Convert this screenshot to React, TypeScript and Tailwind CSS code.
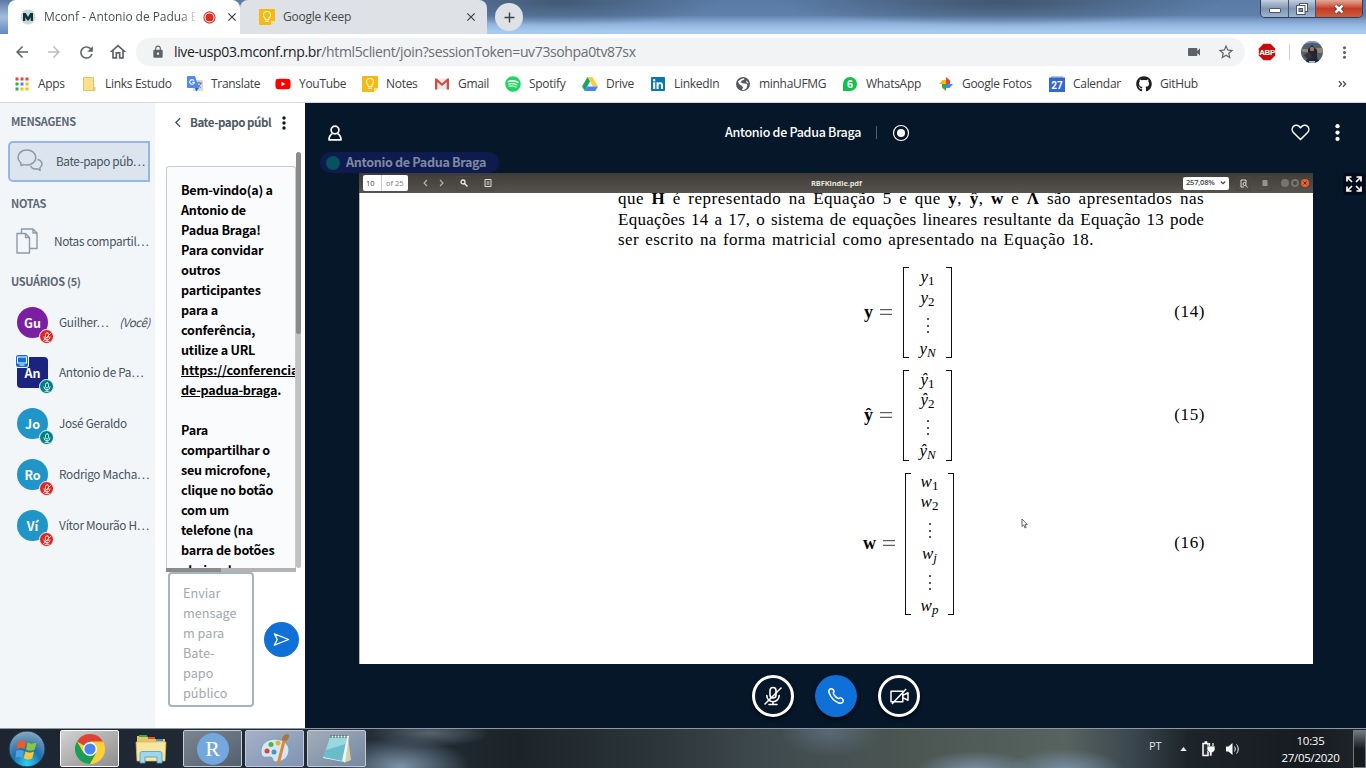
import React from "react";
import { MdArrowBack, MdArrowForward, MdRefresh, MdOutlineHome, MdLock, MdVideocam, MdStarBorder, MdMoreVert, MdClose, MdAdd } from "react-icons/md";
import { FaGithub, FaSpotify, FaYoutube, FaLinkedin } from "react-icons/fa";

const UI = "font-['Open_Sans','Noto_Sans',sans-serif]";
const BBB = "font-['Noto_Sans_CJK_SC','Noto_Sans',sans-serif]";

/* ---------- browser chrome ---------- */

function KeepIcon() {
  return (
    <svg viewBox="0 0 16 16" className="size-4 shrink-0">
      <path d="M1 0h14a1 1 0 0 1 1 1v11l-4 4H1a1 1 0 0 1-1-1V1a1 1 0 0 1 1-1z" fill="#f5b912" />
      <path d="M16 12l-4 4v-4z" fill="#fde28a" />
      <path d="M6.200 9.200C4.700 8 4.500 6.800 4.500 6a3.500 3.500 0 0 1 7 0c0 .8-.2 2-1.700 3.200V10.500H6.200z" fill="none" stroke="#fff3cf" strokeWidth="1.100" />
      <path d="M6.200 12.200h3.600" stroke="#fff" strokeWidth="1.200" />
    </svg>
  );
}

function WindowButtons() {
  return (
    <div className="mr-[3px] flex h-[18px] w-[103px] overflow-hidden rounded-b-[5px] border border-t-0 border-[#2e3f58]">
      <div className="flex w-[28px] items-end justify-center border-r border-[#41546d] bg-linear-to-b from-[#c3d0e0] via-[#8196b2] to-[#9db3cf] pb-[4px]">
        <div className="h-[5px] w-[12px] rounded-[1px] border border-[#4b5666] bg-white" />
      </div>
      <div className="flex w-[27px] items-center justify-center border-r border-[#41546d] bg-linear-to-b from-[#c3d0e0] via-[#8196b2] to-[#9db3cf]">
        <svg viewBox="0 0 12 12" className="size-3">
          <rect x="3.500" y=".5" width="8" height="8" fill="#fff" stroke="#4b5666" />
          <rect x=".5" y="2.500" width="8.500" height="9" fill="#fff" stroke="#4b5666" />
          <rect x="3" y="5.500" width="3.500" height="3" fill="#8196b2" stroke="#4b5666" />
        </svg>
      </div>
      <div className="flex flex-1 items-center justify-center bg-linear-to-b from-[#e3a899] via-[#c13c26] to-[#cf5c3d]">
        <svg viewBox="0 0 12 10" className="h-[10px] w-3">
          <path d="M2.500 1.500l7 7M9.500 1.500l-7 7" stroke="#5b2a28" strokeWidth="4.200" />
          <path d="M2.500 1.500l7 7M9.500 1.500l-7 7" stroke="#fff" strokeWidth="2.600" />
        </svg>
      </div>
    </div>
  );
}

function TabStrip() {
  return (
    <div className="flex h-[34px] bg-[radial-gradient(ellipse_160px_24px_at_560px_2px,#435a76_0%,transparent_100%),radial-gradient(ellipse_220px_24px_at_1000px_2px,#41566f_0%,transparent_100%),linear-gradient(180deg,#5b7ba6_0%,#5f80aa_45%,#8fb2dc_70%,#a8caf0_92%)]">
      <div className="w-2 bg-linear-to-b from-[#5c7ba5] via-[#a3bcdc] to-[#6389bd]" />
      <div className="flex w-[232px] items-center rounded-t-[8px] bg-white pl-[12px]">
        <svg viewBox="0 0 16 16" className="size-4 shrink-0">
          <circle cx="8" cy="8" r="7.500" fill="#c9d9dc" />
          <path d="M3 12V4h2.800L8 8l2.200-4H13v8h-2.300V8.200L8.800 11.500H7.200L5.300 8.200V12z" fill="#12333c" />
        </svg>
        <div className={`${UI} ml-[8px] w-[151px] whitespace-nowrap bg-linear-to-r from-[#45494d] from-90% to-[#45494d30] bg-clip-text text-[12px] leading-[18px] tracking-[-0.050px] text-transparent`}>Mconf - Antonio de Padua B</div>
        <svg viewBox="0 0 14 14" className="ml-[8px] size-[13px] shrink-0">
          <circle cx="7" cy="7" r="6" fill="none" stroke="#d93025" strokeWidth="1.200" />
          <circle cx="7" cy="7" r="4.300" fill="#d93025" />
        </svg>
        <MdClose className="ml-[9px] size-[14px] shrink-0 text-[#3c4043]" />
      </div>
      <div className="flex w-[247px] items-center rounded-t-[8px] bg-[#dee1e6] pl-[19px]">
        <KeepIcon />
        <div className={`${UI} ml-[8px] flex-1 text-[12px] leading-[18px] tracking-[-0.250px] text-[#45494d]`}>Google Keep</div>
        <MdClose className="mr-[9px] size-[14px] text-[#3c4043]" />
      </div>
      <div className="ml-[8px] mt-[3px] flex size-7 items-center justify-center rounded-full bg-[#dee1e6]">
        <MdAdd className="size-[17px] text-[#3c4043]" />
      </div>
      <div className="flex-1" />
      <WindowButtons />
    </div>
  );
}

function Toolbar() {
  return (
    <div className="flex h-[36px] items-center bg-white text-[#5f6368]">
      <MdArrowBack className="ml-[13px] size-[18px]" />
      <MdArrowForward className="ml-[14px] size-[18px] text-[#bbbdc0]" />
      <MdRefresh className="ml-[14px] size-[19px]" />
      <MdOutlineHome className="ml-[12px] size-[20px]" />
      <div className="ml-[8px] flex h-7 w-[1109px] items-center rounded-full bg-[#f1f3f4] pl-[15px] pr-[10px]">
        <MdLock className="size-[14px]" />
        <div className={`${UI} ml-[9px] flex-1 text-[14px] leading-5 tracking-[-0.370px] text-[#6a6e73]`}>
          <span className="text-[#202124]">live-usp03.mconf.rnp.br</span>/html5client/join?sessionToken=uv73sohpa0tv87sx
        </div>
        <MdVideocam className="size-[16px]" />
        <MdStarBorder className="ml-[15px] size-[18px]" />
      </div>
      <svg viewBox="0 0 18 18" className="ml-[13px] size-[18px]">
        <path d="M5.500 .8h7l4.700 4.700v7l-4.700 4.700h-7L.8 12.500v-7z" fill="#c70d0d" />
        <text x="9" y="12" textAnchor="middle" fontFamily="Liberation Sans, sans-serif" fontWeight="bold" fontSize="8" letterSpacing="-.4" fill="#fff">ABP</text>
      </svg>
      <div className="ml-[13px] h-4 w-px bg-[#cdd0d3]" />
      <svg viewBox="0 0 22 22" className="ml-[11px] size-[22px] rounded-full">
        <rect width="22" height="22" fill="#52616f" />
        <path d="M0 5c6-4 15-5 22 0V0H0z" fill="#7fa9d8" />
        <path d="M0 8h7v3H2zM15 7h7v5h-5z" fill="#93857a" />
        <path d="M7 8l4-4 5 5v8l4 5H4l3-6z" fill="#24252e" />
        <circle cx="11" cy="8" r="2.200" fill="#9b7466" />
        <path d="M3 14l5-3 4 5-5 3z" fill="#39343b" />
        <path d="M8 20h6v2H8z" fill="#9fc0df" />
      </svg>
      <MdMoreVert className="ml-[12px] size-[19px]" />
    </div>
  );
}

const AppsIcon = () => (
  <svg viewBox="0 0 16 16" className="size-4">
    {["#ea4335", "#ea4335", "#ea4335", "#34a853", "#4285f4", "#fbbc05", "#34a853", "#fbbc05", "#fbbc05"].map((c, i) => (
      <rect key={i} x={1.500 + (i % 3) * 5} y={1.500 + Math.floor(i / 3) * 5} width="3" height="3" fill={c} />
    ))}
  </svg>
);
const FolderIcon = () => (
  <svg viewBox="0 0 16 16" className="size-4">
    <path d="M2.500 1.500h10v10h1.500v3H2.500z" fill="#fbe18d" stroke="#e6c35f" />
    <path d="M12.500 11v3.500" stroke="#e6c35f" />
  </svg>
);
const TranslateIcon = () => (
  <svg viewBox="0 0 16 16" className="size-4">
    <rect x="6" y="4" width="10" height="11" rx="1" fill="#d5dade" />
    <path d="M9 7h6M12 5.500V7m-1.800 0c.5 2.200 2 3.800 3.600 4.600M13.800 7c-.5 2-2 4-3.600 4.800" stroke="#68747d" fill="none" />
    <path d="M1 0h7l4 12H1a1 1 0 0 1-1-1V1a1 1 0 0 1 1-1z" fill="#4c8bf5" />
    <path d="M8 12h4l-3 3.500z" fill="#2b5fc4" />
    <path d="M7 4.700A2.300 2.300 0 1 0 7.300 6.300H5.200" stroke="#fff" fill="none" strokeWidth="1.100" />
  </svg>
);
const GmailIcon = () => (
  <svg viewBox="0 0 16 16" className="size-4">
    <path d="M1 2.500h14v11H1z" fill="#e9e9e9" />
    <path d="M1 13.500v-11h1.500L8 7.200l5.500-4.700H15v11h-2.300V6L8 10 3.300 6v7.500z" fill="#d54b3d" />
  </svg>
);
const DriveIcon = () => (
  <svg viewBox="0 0 16 16" className="size-4">
    <path d="M5.500 1h5L16 10.500h-5z" fill="#fbcf3c" />
    <path d="M5.500 1L8 5.500 2.800 15 0 10.500z" fill="#1da362" />
    <path d="M5.200 10.500H16L13.300 15H2.700z" fill="#4a83f0" />
  </svg>
);
const GlobeIcon = () => (
  <svg viewBox="0 0 16 16" className="size-4">
    <circle cx="8" cy="8" r="7" fill="#54585c" />
    <path d="M3 5.500c1.500-1.500 3-3 5.500-3.300l1 1.300-2.500 1-1.500 1.800 2 .9 4 .6 1 1.500-1 3-3 2-1.500-.6 1-2.200-1-1.500L4 8z" fill="#fff" />
    <path d="M11 4.500l2 1.500.5 1.500-2-1z" fill="#fff" />
  </svg>
);
const WhatsIcon = () => (
  <svg viewBox="0 0 16 16" className="size-4">
    <path d="M1 15V8a7 7 0 1 1 7 7z" fill="#12c148" />
    <text x="8" y="12" textAnchor="middle" fontFamily="Liberation Sans, sans-serif" fontWeight="bold" fontSize="11" fill="#fff">6</text>
  </svg>
);
const PhotosIcon = () => (
  <svg viewBox="0 0 16 16" className="size-4">
    <path d="M8 8V1l4 3.500V8z" fill="#ea4335" />
    <path d="M8 8h7l-3.500 4H8z" fill="#4285f4" />
    <path d="M8 8v7l-4-3.500V8z" fill="#34a853" />
    <path d="M8 8H1l3.500-4H8z" fill="#fbbc05" />
  </svg>
);
const CalendarIcon = () => (
  <svg viewBox="0 0 16 16" className="size-4">
    <path d="M2 0h12v3H2z" fill="#c5c9ce" />
    <rect y="1.500" width="16" height="14.500" fill="#3367d6" />
    <text x="8" y="12.500" textAnchor="middle" fontFamily="Roboto, sans-serif" fontWeight="bold" fontSize="10" fill="#fff">27</text>
  </svg>
);

function Bookmarks() {
  const items: [string, string, React.ReactNode][] = [
    ["Apps", "w-[67px]", <AppsIcon />],
    ["Links Estudo", "w-[106px]", <FolderIcon />],
    ["Translate", "w-[88px]", <TranslateIcon />],
    ["YouTube", "w-[87px]", <FaYoutube className="size-4 text-[#f00]" />],
    ["Notes", "w-[72px]", <KeepIcon />],
    ["Gmail", "w-[71px]", <GmailIcon />],
    ["Spotify", "w-[77px]", <FaSpotify className="size-4 text-[#1ed760]" />],
    ["Drive", "w-[68px]", <DriveIcon />],
    ["LinkedIn", "w-[85px]", <FaLinkedin className="size-4 text-[#0a76b4]" />],
    ["minhaUFMG", "w-[107px]", <GlobeIcon />],
    ["WhatsApp", "w-[96px]", <WhatsIcon />],
    ["Google Fotos", "w-[111px]", <PhotosIcon />],
    ["Calendar", "w-[87px]", <CalendarIcon />],
    ["GitHub", "w-[64px]", <FaGithub className="size-4 text-[#1b1f23]" />],
  ];
  return (
    <div className="flex h-[33px] items-center border-b border-[#d5d9dd] bg-white pl-[14px] pb-[4px]">
      {items.map(([label, w, icon]) => (
        <div key={label} className={`${w} flex shrink-0 items-center gap-2`}>
          <div className="size-4 shrink-0">{icon}</div>
          <span className={`${UI} whitespace-nowrap text-[12px] leading-4 tracking-[-0.300px] text-[#3c4043]`}>{label}</span>
        </div>
      ))}
      <svg viewBox="0 0 10 8" className="ml-auto mr-[19px] h-[8px] w-[9px]">
        <path d="M1 1l3 3-3 3M5.500 1l3 3-3 3" fill="none" stroke="#4d5156" strokeWidth="1.500" />
      </svg>
    </div>
  );
}

/* ---------- participants panel ---------- */

function Mic({ muted, className }: { muted?: boolean; className: string }) {
  return (
    <svg viewBox="0 0 20 20" className={className} fill="none" stroke="currentColor" strokeWidth="1.600" strokeLinecap="round">
      <rect x="7" y="1.500" width="6" height="10.500" rx="3" />
      <path d="M3.800 9.500a6.200 6.200 0 0 0 12.400 0M10 15.800v2.700M6 18.500h8" />
      {muted && <path d="M2 18L18 2" />}
    </svg>
  );
}

function User({ initials, name, color, muted, you, presenter }: { initials: string; name: string; color: string; muted?: boolean; you?: boolean; presenter?: boolean }) {
  return (
    <div className="flex h-[51px] items-center pl-[17px] first:-mb-px">
      <div className={`relative flex size-[31px] shrink-0 items-center justify-center text-[12.500px] leading-4 font-bold text-white ${color} ${presenter ? "rounded-[4px]" : "rounded-full"}`}>
        {initials}
        <div className={`absolute -bottom-[6px] -right-[6px] flex size-[15px] items-center justify-center rounded-full border-[1.500px] border-[#f3f6f9] ${muted ? "bg-[#df2721]" : "bg-[#008081]"}`}>
          <Mic muted={muted} className="size-[10px]" />
        </div>
        {presenter && (
          <div className="absolute -left-[1px] -top-[2px] flex size-[12px] items-center justify-center rounded-[2px] bg-[#0f70d7] ring-1 ring-white">
            <svg viewBox="0 0 12 12" className="size-[12px]" fill="none" stroke="#fff">
              <rect x="1.500" y="2" width="9" height="6" />
              <path d="M3.500 10h5" />
            </svg>
          </div>
        )}
      </div>
      <div className="-mt-px ml-[11px] flex w-[91px] justify-between whitespace-nowrap text-[11.800px] leading-5 tracking-[-0.300px] text-[#46535f]">
        <span>{name}</span>
        {you && <span className="text-[11.500px] italic tracking-[-0.400px]">(Você)</span>}
      </div>
    </div>
  );
}

function Sidebar() {
  const title = "pl-[11px] text-[11px] leading-4 font-bold tracking-[-0.350px] text-[#5c6874]";
  return (
    <div className={`${BBB} w-[155px] shrink-0 overflow-hidden bg-[#f3f6f9]`}>
      <div className={`${title} pt-[10px]`}>MENSAGENS</div>
      <div className="ml-[8px] mt-[12px] flex h-[41px] w-[142px] items-center rounded-l-[5px] border-2 border-[#92b8e8] bg-[#dce4ed] pb-[2px] pl-[7px]">
        <svg viewBox="0 0 26 24" className="h-6 w-[26px] shrink-0" fill="none" stroke="#8b9aa8" strokeWidth="1.500" strokeLinejoin="round">
          <path d="M4 16.500c.2-1.300 0-2.200-.5-3C1.800 12 1 10.500 1 8.500 1 4.300 4.800 1 9.800 1s9 3.300 9 7.500-4 7.500-9 7.500c-1 0-2-.1-3-.4z" />
          <path d="M20.500 10.500c2.800.6 4.500 2.300 4.500 4.600 0 1.500-.8 2.700-2 3.500-.3.900-.2 1.800.2 2.700l-2.800-1.500c-3.400.6-6-.8-6.900-3" />
        </svg>
        <span className="ml-[13px] whitespace-nowrap text-[11.800px] leading-5 tracking-[-0.380px] text-[#46535f]">Bate-papo púb…</span>
      </div>
      <div className={`${title} mt-[13px]`}>NOTAS</div>
      <div className="mt-[10px] flex h-[40px] items-center pl-[16px]">
        <svg viewBox="0 0 22 26" className="h-[26px] w-[22px] shrink-0" fill="none" stroke="#8b9aa8" strokeWidth="1.400" strokeLinejoin="round">
          <path d="M1 5.500h8.500l4 4V25H1zM9.500 5.500v4h4" />
          <path d="M5.500 5.500V1H17l4 4v15.500h-7.500M17 1v4h4" />
        </svg>
        <span className="ml-[16px] whitespace-nowrap text-[11.800px] leading-5 tracking-[-0.340px] text-[#46535f]">Notas compartil…</span>
      </div>
      <div className={`${title} mt-[12px]`}>USUÁRIOS (5)</div>
      <div className="mt-[8px] flex flex-col">
        <User initials="Gu" name="Guilher…" color="bg-[#7b1fa2]" muted you />
        <User initials="An" name="Antonio de Pa…" color="bg-[#1a237e]" presenter />
        <User initials="Jo" name="José Geraldo" color="bg-[#2095c7]" />
        <User initials="Ro" name="Rodrigo Macha…" color="bg-[#2095c7]" muted />
        <User initials="Ví" name="Vítor Mourão H…" color="bg-[#2095c7]" muted />
      </div>
    </div>
  );
}

/* ---------- chat panel ---------- */

function Chat() {
  const lines = ["Bem-vindo(a) a", "Antonio de", "Padua Braga!", "Para convidar", "outros", "participantes", "para a", "conferência,", "utilize a URL"];
  const rest = ["", "Para", "compartilhar o", "seu microfone,", "clique no botão", "com um", "telefone (na", "barra de botões", "abaixo da"];
  return (
    <div className={`${BBB} flex w-[150px] shrink-0 flex-col bg-white`}>
      <div className="flex h-[39px] items-center pl-[20px]">
        <svg viewBox="0 0 7 12" className="h-[11px] w-[6px]" fill="none" stroke="#3d4a58" strokeWidth="1.400">
          <path d="M6 1L1 6l5 5" />
        </svg>
        <span className="-mt-[2px] ml-[9px] w-[80px] whitespace-nowrap text-[11.600px] font-bold leading-5 tracking-[-0.480px] text-[#4e5a66]">Bate-papo públ</span>
        <svg viewBox="0 0 4 14" className="ml-[12px] h-[14px] w-[4px] fill-[#06172a]">
          <circle cx="2" cy="2" r="1.700" /><circle cx="2" cy="7" r="1.700" /><circle cx="2" cy="12" r="1.700" />
        </svg>
      </div>
      <div className="flex h-[426px] pl-[11px]">
        <div className="mt-[24px] h-[402px] w-[130px] overflow-hidden rounded-t-[3px] border border-b-0 border-[#c3ccd5] bg-[#f9fbfd] pl-[14px] pt-[13px] text-[12.600px] font-bold leading-5 tracking-[-0.220px] text-black">
          {lines.map((l) => <div key={l} className="h-5 whitespace-nowrap">{l}</div>)}
          <div className="h-5 whitespace-nowrap tracking-[-0.080px] underline">https://conferencia</div>
          <div className="h-5 whitespace-nowrap"><span className="underline">de-padua-braga</span>.</div>
          {rest.map((l, i) => <div key={i} className="h-5 whitespace-nowrap">{l}</div>)}
        </div>
        <div className="mt-[10px] flex h-[416px] w-[5px] flex-col overflow-hidden rounded-full bg-[#c1c1c1]">
          <div className="h-[182px] rounded-full bg-[#8b8b8b]" />
        </div>
      </div>
      <div className="ml-[11px] flex h-[4px] w-[130px] shrink-0 bg-[#b3b3b3]">
        <div className="w-[55px] bg-[#8b8b8b]" />
      </div>
      <div className="flex items-center pl-[13px]">
        <div className="h-[135px] w-[86px] rounded-[4px] border-2 border-[#a7b3bd] pl-[13px] pt-[9px] text-[12.700px] leading-5 text-[#a1a8ae]">
          {["Enviar", "mensage", "m para", "Bate-", "papo", "público"].map((l) => <div key={l}>{l}</div>)}
        </div>
        <div className="ml-[10px] flex size-[35px] items-center justify-center rounded-full bg-[#0f70d7]">
          <svg viewBox="0 0 18 15" className="h-[15px] w-[17px]" fill="none" stroke="#fff" strokeWidth="1.400" strokeLinejoin="round">
            <path d="M1.500 1.500L16.500 7.500l-15 6 3-6z" />
          </svg>
        </div>
      </div>
    </div>
  );
}

/* ---------- shared document ---------- */

const MATH = "font-['Liberation_Serif',serif] text-black";

function Dots() {
  return (
    <div className="flex h-[15px] shrink-0 flex-col items-center justify-between">
      <div className="size-[2px] rounded-full bg-[#222]" />
      <div className="size-[2px] rounded-full bg-[#222]" />
      <div className="size-[2px] rounded-full bg-[#222]" />
    </div>
  );
}

function Entry({ base, sub, italic, className }: { base: string; sub: string; italic?: boolean; className: string }) {
  return (
    <div className={`flex h-5 shrink-0 items-baseline justify-center text-[17px] italic leading-[20px] ${className}`}>
      <span>{base}</span>
      <span className={`relative top-[3px] text-[13px] leading-none ${italic ? "italic" : "not-italic"}`}>{sub}</span>
    </div>
  );
}

function Equation({ lhs, lhsClass, matrixClass, no, className, children }: { lhs: string; lhsClass: string; matrixClass: string; no: string; className: string; children: React.ReactNode }) {
  return (
    <div className={`flex items-center ${className}`}>
      <div className={`flex items-center pb-[2px] text-[18px] leading-5 ${lhsClass}`}>
        <b>{lhs}</b>
        <svg viewBox="0 0 12 6" className="ml-[7px] h-[6px] w-[12px]"><path d="M0 .7h12M0 5.300h12" stroke="#222" strokeWidth=".9" /></svg>
      </div>
      <div className={`flex h-full justify-between ${matrixClass}`}>
        <div className="w-[6px] shrink-0 border-y border-l border-[#111]" />
        <div className="flex flex-col items-center">{children}</div>
        <div className="w-[6px] shrink-0 border-y border-r border-[#111]" />
      </div>
      <div className="ml-auto mr-[108px] pb-[2px] text-[17px] leading-5 tracking-[0.600px]">({no})</div>
    </div>
  );
}

function Presentation() {
  const box = "flex h-[15px] w-[15px] items-center justify-center rounded-[2px] border border-[#4a4743]";
  return (
    <div className="flex h-[491px] w-[954px] flex-col overflow-hidden bg-white">
      <div className={`${UI} flex h-[20px] shrink-0 items-center bg-linear-to-b from-[#3e3c39] to-[#57534e] text-[7.500px] text-[#e4e1dc]`}>
        <div className="ml-[4px] flex h-[16px] w-[45px] items-center rounded-[2px] bg-white leading-4">
          <span className="w-[19px] border-r border-[#c9c9c9] pl-[3px] text-[#444]">10</span>
          <span className="pl-[4px] text-[#777]">of 25</span>
        </div>
        <svg viewBox="0 0 22 8" className="ml-[15px] h-[8px] w-[22px]" fill="none" stroke="#bab6b0" strokeWidth="1.100"><path d="M4 1L1 4l3 3M17 1l3 3-3 3" /></svg>
        <div className={`${box} ml-[11px]`}>
          <svg viewBox="0 0 8 8" className="size-[8px]" fill="none" stroke="#eee" strokeWidth="1.300"><circle cx="3" cy="3" r="2" /><path d="M4.700 4.700L7.500 7.500" /></svg>
        </div>
        <div className={`${box} ml-[9px]`}>
          <svg viewBox="0 0 8 8" className="size-[8px]" fill="none" stroke="#ddd"><path d="M1 .5h6v7H1zM2.500 3h3M2.500 5h3" /></svg>
        </div>
        <div className="ml-[316px] w-[52px] whitespace-nowrap font-bold leading-4 tracking-[-0.120px]">RBFKindle.pdf</div>
        <div className="ml-[320px] flex h-[13px] w-[46px] items-center justify-between rounded-[2px] bg-white px-[3px] text-[#444]">
          <span className="font-semibold leading-none tracking-[-0.200px]">257,08%</span>
          <svg viewBox="0 0 8 5" className="h-[4px] w-[6px]" fill="none" stroke="#444" strokeWidth="1.500"><path d="M1 .5l3 3 3-3" /></svg>
        </div>
        <div className={`${box} ml-[7px]`}>
          <svg viewBox="0 0 8 9" className="h-[9px] w-[8px]" fill="none" stroke="#ddd"><path d="M1 1h5v3M1 1v7h3" /><circle cx="4.500" cy="5" r="1.500" /><path d="M5.500 6L7.500 8.500" /></svg>
        </div>
        <div className={`${box} ml-[6px]`}>
          <svg viewBox="0 0 6 6" className="size-[6px]" stroke="#ddd"><path d="M.5 1h5M.5 3h5M.5 5h5" /></svg>
        </div>
        <div className="ml-[9px] size-[8px] rounded-full bg-[#77736e]" />
        <div className="ml-[2px] size-[8px] rounded-full border-2 border-[#77736e]" />
        <div className="ml-[2px] flex size-[8px] items-center justify-center rounded-full bg-[#e8622c]">
          <svg viewBox="0 0 4 4" className="size-[4px]" stroke="#5b2a15"><path d="M.5 .5l3 3M3.500 .5l-3 3" /></svg>
        </div>
      </div>
      <div className={`${MATH} relative flex-1 overflow-hidden border-l border-[#b5b5b5]`}>
        <div className="-mt-[4px] ml-[258px] w-[586px] text-[17px] leading-[20.500px] [text-align-last:justify]">
          <div className="whitespace-nowrap tracking-[0.500px]">que <b>H</b> é representado na Equação 5 e que <b>y</b>, <b>ŷ</b>, <b>w</b> e <b>Λ</b> são apresentados nas</div>
          <div className="whitespace-nowrap tracking-[0.250px]">Equações 14 a 17, o sistema de equações lineares resultante da Equação 13 pode</div>
          <div className="w-[476px] whitespace-nowrap tracking-[0.450px]">ser escrito na forma matricial como apresentado na Equação 18.</div>
        </div>
        <Equation lhs="y" lhsClass="ml-[504px]" matrixClass="ml-[11px] w-[49px]" no="14" className="mt-[16.500px] h-[91px]">
          <Entry base="y" sub="1" className="" />
          <Entry base="y" sub="2" className="mt-px" />
          <div className="mt-[10px]"><Dots /></div>
          <Entry base="y" sub="N" italic className="mt-[6px]" />
        </Equation>
        <Equation lhs="ŷ" lhsClass="ml-[504px]" matrixClass="ml-[11px] w-[49px]" no="15" className="mt-[12px] h-[91px]">
          <Entry base="ŷ" sub="1" className="" />
          <Entry base="ŷ" sub="2" className="" />
          <div className="mt-[10px]"><Dots /></div>
          <Entry base="ŷ" sub="N" italic className="mt-[6px]" />
        </Equation>
        <Equation lhs="w" lhsClass="ml-[503px]" matrixClass="ml-[10px] w-[49px]" no="16" className="mt-[12px] h-[142px]">
          <Entry base="w" sub="1" className="-mt-px" />
          <Entry base="w" sub="2" className="" />
          <div className="mt-[11px]"><Dots /></div>
          <Entry base="w" sub="j" italic className="mt-[6px]" />
          <div className="mt-[11px]"><Dots /></div>
          <Entry base="w" sub="p" italic className="mt-[6px]" />
        </Equation>
        <svg viewBox="0 0 7 11" className="absolute left-[661px] top-[325px] h-[11px] w-[7px]"><path d="M1 1v7.500l1.800-1.500 1.200 3 1.200-.6-1.200-2.800h2.300z" fill="#fff" stroke="#555" strokeWidth=".9" /></svg>
      </div>
    </div>
  );
}

function Meeting() {
  const round = "flex size-[42px] items-center justify-center rounded-full text-white shadow-[0_2px_4px_#000c]";
  return (
    <div className={`${BBB} flex flex-1 flex-col bg-[#06172a]`}>
      <div className="flex h-[49px] items-center pt-[10px] text-white">
        <svg viewBox="0 0 14 16" className="ml-[23px] h-[16px] w-[14px]" fill="none" stroke="currentColor" strokeWidth="1.700" strokeLinejoin="round">
          <circle cx="7" cy="5" r="3.900" />
          <path d="M4.500 8.500C2.300 9.800 1 11.700 1 14.800h12c0-3.100-1.300-5-3.500-6.300" />
        </svg>
        <span className="-mt-[2px] ml-[383px] w-[137px] whitespace-nowrap text-[12.500px] font-medium leading-5 tracking-[-0.290px]">Antonio de Padua Braga</span>
        <div className="ml-[14px] h-[13px] w-px bg-[#506071]" />
        <svg viewBox="0 0 18 18" className="ml-[15px] size-[18px]"><circle cx="9" cy="9" r="7.500" fill="none" stroke="#fff" strokeWidth="1.200" /><circle cx="9" cy="9" r="4" fill="#fff" /></svg>
        <svg viewBox="0 0 20 18" className="ml-auto h-[17px] w-[19px]" fill="none" stroke="#fff" strokeWidth="1.600" strokeLinejoin="round"><path d="M10 16.500L2.500 9C.8 7.200.8 4.300 2.400 2.700 4.500.6 8 1 10 4c2-3 5.500-3.400 7.600-1.300 1.600 1.600 1.600 4.500-.1 6.300z" /></svg>
        <svg viewBox="0 0 4 16" className="ml-[25px] mr-[26px] h-[17px] w-[5px] fill-white"><circle cx="2" cy="2" r="2" /><circle cx="2" cy="8" r="2" /><circle cx="2" cy="14" r="2" /></svg>
      </div>
      <div className="ml-[15px] flex h-[21px] w-[179px] items-center rounded-full bg-[#0e1b4e]">
        <div className="ml-[6px] size-[14px] rounded-full bg-[#07535b]" />
        <span className="-mt-[2px] ml-[6px] whitespace-nowrap text-[12.600px] font-bold leading-5 tracking-[-0.340px] text-[#7f88a3]">Antonio de Padua Braga</span>
      </div>
      <div className="flex pl-[54px]">
        <Presentation />
        <div className="ml-[30px] flex size-[22px] items-center justify-center rounded-[4px] bg-[#030c18]">
          <svg viewBox="0 0 16 16" className="size-4" fill="none" stroke="#fff" strokeWidth="1.700"><path d="M1 5.500V1h4.500M1 1l5 5M10.500 1H15v4.500M15 1l-5 5M1 10.500V15h4.500M1 15l5-5M15 10.500V15h-4.500M15 15l-5-5" /></svg>
        </div>
      </div>
      <div className="ml-[447px] flex h-[64px] items-center gap-[21px]">
        <div className={`${round} border-3 border-white`}><Mic muted className="size-[20px]" /></div>
        <div className={`${round} bg-[#0f70d7]`}>
          <svg viewBox="0 0 20 20" className="size-[18px]" fill="none" stroke="currentColor" strokeWidth="1.700" strokeLinejoin="round">
            <path d="M3 2.500C5 1.200 7 2.500 7.800 4.600c.4 1.200-1 1.700-.8 2.500.6 2 3.600 5 5.700 5.700.9.200 1.500-1.100 2.600-.7 2 .7 3.500 2.700 2.300 4.500-1.200 1.600-3.200 1.600-5 .9C8.500 15.800 4.300 11.500 2.500 7 1.800 5.200 1.800 3.500 3 2.500z" />
          </svg>
        </div>
        <div className={`${round} border-3 border-white`}>
          <svg viewBox="0 0 22 18" className="h-[17px] w-[21px]" fill="none" stroke="currentColor" strokeWidth="1.600" strokeLinejoin="round">
            <path d="M2 3.500h12.500v11H2zM15 7.500l5-2.500v8l-5-2.500M3 17L18 1" />
          </svg>
        </div>
      </div>
    </div>
  );
}

/* ---------- taskbar ---------- */

function Taskbar() {
  const btn = "flex h-[37px] w-[59px] items-center justify-center rounded-[2px] border border-[#c3cbd6]";
  return (
    <div className="flex h-[40px] items-center border-t border-[#8d98a0] bg-[radial-gradient(ellipse_70px_30px_at_400px_38px,#7d93a8_0%,transparent_100%),radial-gradient(ellipse_60px_20px_at_975px_42px,#7c92a8_0%,transparent_100%),radial-gradient(ellipse_60px_22px_at_1065px_42px,#7a90a6_0%,transparent_100%),radial-gradient(ellipse_50px_26px_at_830px_2px,#596977_0%,transparent_100%),radial-gradient(ellipse_60px_14px_at_430px_4px,#56646f_0%,transparent_100%),linear-gradient(90deg,#1d2630_0%,#232d37_28%,#1c2429_38%,#2c3539_48%,#3f4a4e_56%,#4d5854_68%,#56635f_78%,#3a464f_83%,#1d242a_87%,#161b20_96%,#20262b_100%)]">
      <svg viewBox="0 0 38 38" className="ml-[8px] size-[38px]">
        <defs>
          <radialGradient id="orb" cx=".5" cy=".9" r=".9"><stop offset="0" stopColor="#2fd0f5" /><stop offset=".45" stopColor="#1c6fae" /><stop offset="1" stopColor="#8ea9bd" /></radialGradient>
        </defs>
        <circle cx="19" cy="19" r="18" fill="url(#orb)" stroke="#16324a" />
        <path d="M10 12c3-2 5-2 8 0l-1.500 7c-3-1.500-5-1.500-8 0z" fill="#ee5a24" />
        <path d="M19.500 12.500c3 1.500 5 1.500 9 0l-2 7.500c-3 1.300-6 1-8.500-.5z" fill="#8cc63f" />
        <path d="M8 21c3-1.500 5-1.500 8 0l-1.500 7c-3-1.500-5-1.500-7 0z" fill="#4aa3e0" />
        <path d="M17.500 21.500c3 1.500 5.500 1.500 8.500 0l-1.800 7c-3 1.500-5.500 1.500-8.500-.3z" fill="#fdc82f" />
      </svg>
      <div className={`${btn} ml-[14px] border-white bg-linear-to-br from-[#d3d3d3] to-[#8d8d8f]`}>
        <svg viewBox="0 0 30 30" className="size-[30px]">
          <circle cx="15" cy="15" r="15" fill="#fbd038" />
          <path d="M15 15L2 7.500A15 15 0 0 1 28 7.500H15z" fill="#dc4437" />
          <path d="M2 7.500A15 15 0 0 0 15 30l6.500-11.300L8.500 18.700z" fill="#1b9d58" />
          <path d="M15 8h13A15 15 0 0 1 15 30l6.500-11.300z" fill="#fbd038" />
          <circle cx="15" cy="15" r="7" fill="#fff" /><circle cx="15" cy="15" r="5.600" fill="#4a86f0" />
        </svg>
      </div>
      <svg viewBox="0 0 32 30" className="ml-[16px] h-[30px] w-[32px]">
        <path d="M2 2h10l2 3h16v20H2z" fill="#e3c565" />
        <path d="M4 1h8v2H4z" fill="#3ca55c" /><path d="M13 3h7v2h-7z" fill="#e05238" /><path d="M21 5h7v2h-7z" fill="#3f8fd8" />
        <path d="M1 8h30l-1 19H2z" fill="#f7e6a0" stroke="#d4b65b" strokeWidth=".7" />
        <path d="M5 29v-9c0-2 1-2.500 3-2.500h16c2 0 3 .5 3 2.500v9h-5v-6H10v6z" fill="#9ed5ef" stroke="#4c9bc4" strokeWidth=".8" />
      </svg>
      <div className={`${btn} ml-[16px] bg-linear-to-br from-[#aab4c0aa] to-[#74839599]`}>
        <div className="flex size-[32px] items-center justify-center rounded-full bg-[#73a7dd] font-['Liberation_Serif',serif] text-[22px] leading-none text-white">R</div>
      </div>
      <div className={`${btn} ml-[3px] bg-linear-to-br from-[#a5b0c6] to-[#8094b4]`}>
        <svg viewBox="0 0 34 32" className="h-[32px] w-[34px]">
          <path d="M3 20C2 11 9 6 17 6c8 0 14 5 14 11 0 8-7 12-13 12-4 0-2-5-6-5-3 0-8 2-9-4z" fill="#d5e7f5" stroke="#789dbc" />
          <circle cx="9" cy="18" r="2.500" fill="#dc4432" /><circle cx="13" cy="11.500" r="2.500" fill="#54b144" /><circle cx="20" cy="10" r="2.500" fill="#e8b628" /><circle cx="16" cy="19" r="2.500" fill="#4c91c9" />
          <path d="M28 6l-6 24-3 2 0-3 6-23z" fill="#d98a3a" />
          <path d="M24 7c0-3 2-6 6-6 2 1 1 5-2 7z" fill="#a77748" />
        </svg>
      </div>
      <div className={`${btn} ml-[3px] bg-linear-to-br from-[#a3adba] to-[#7488a0]`}>
        <svg viewBox="0 0 32 32" className="size-[32px]">
          <path d="M27 5l3 22-7 3z" fill="#d9cfa9" />
          <path d="M10 3h18l-4 26-22-4z" fill="#eef7f8" />
          <path d="M9 4h17l-5 24-19-4z" fill="#69bcc9" />
          <path d="M9 4h17l-1.500 7L5 17z" fill="#9bd7df" />
          <path d="M10 2v3M13 2v3M16 2v3M19 2v3M22 2v3M25 2v3" stroke="#4a5960" />
        </svg>
      </div>
      <div className={`${UI} ml-[783px] flex flex-1 items-center text-white`}>
        <span className="-mt-[6px] w-[31px] text-[11px] leading-4 tracking-[-0.200px] text-[#dfe3e6]">PT</span>
        <svg viewBox="0 0 8 5" className="mt-px h-[4px] w-[7px] fill-[#e8edf0]"><path d="M4 0l4 5H0z" /></svg>
        <svg viewBox="0 0 14 16" className="ml-[14px] h-[16px] w-[14px]"><path d="M2 2.500h5v12H2zM3.500 1h2v1.500" fill="#28313a" stroke="#fff" strokeWidth="1.500" /><path d="M6 5h8v4l-2 2.500h-1V15H8.500v-3.500L6 9z" fill="#fff" stroke="#28313a" strokeWidth=".7" /><path d="M8.500 2v3M12 2v3" stroke="#fff" strokeWidth="1.200" /></svg>
        <svg viewBox="0 0 15 14" className="ml-[10px] h-[14px] w-[15px]"><path d="M1 4.500h2.500L7.500 1v12l-4-3.500H1z" fill="#fff" /><path d="M9.500 4.500c1 1.500 1 3.500 0 5M11.500 2.500c2.300 2.500 2.300 6.500 0 9" fill="none" stroke="#fff" /></svg>
        <div className="ml-[36px] flex w-[69px] flex-col items-center text-[11.500px] leading-[17px] tracking-[-0.300px]">
          <span>10:35</span>
          <span>27/05/2020</span>
        </div>
        <div className="ml-auto h-[38px] w-[13px] border border-[#6f787e] bg-linear-to-b from-[#727a7f] to-[#171b1e] to-50%" />
      </div>
    </div>
  );
}

export default function App() {
  return (
    <div className="flex h-[768px] w-[1366px] flex-col overflow-hidden">
      <TabStrip />
      <Toolbar />
      <Bookmarks />
      <div className="flex h-[625px] shrink-0">
        <Sidebar />
        <Chat />
        <Meeting />
      </div>
      <Taskbar />
    </div>
  );
}
